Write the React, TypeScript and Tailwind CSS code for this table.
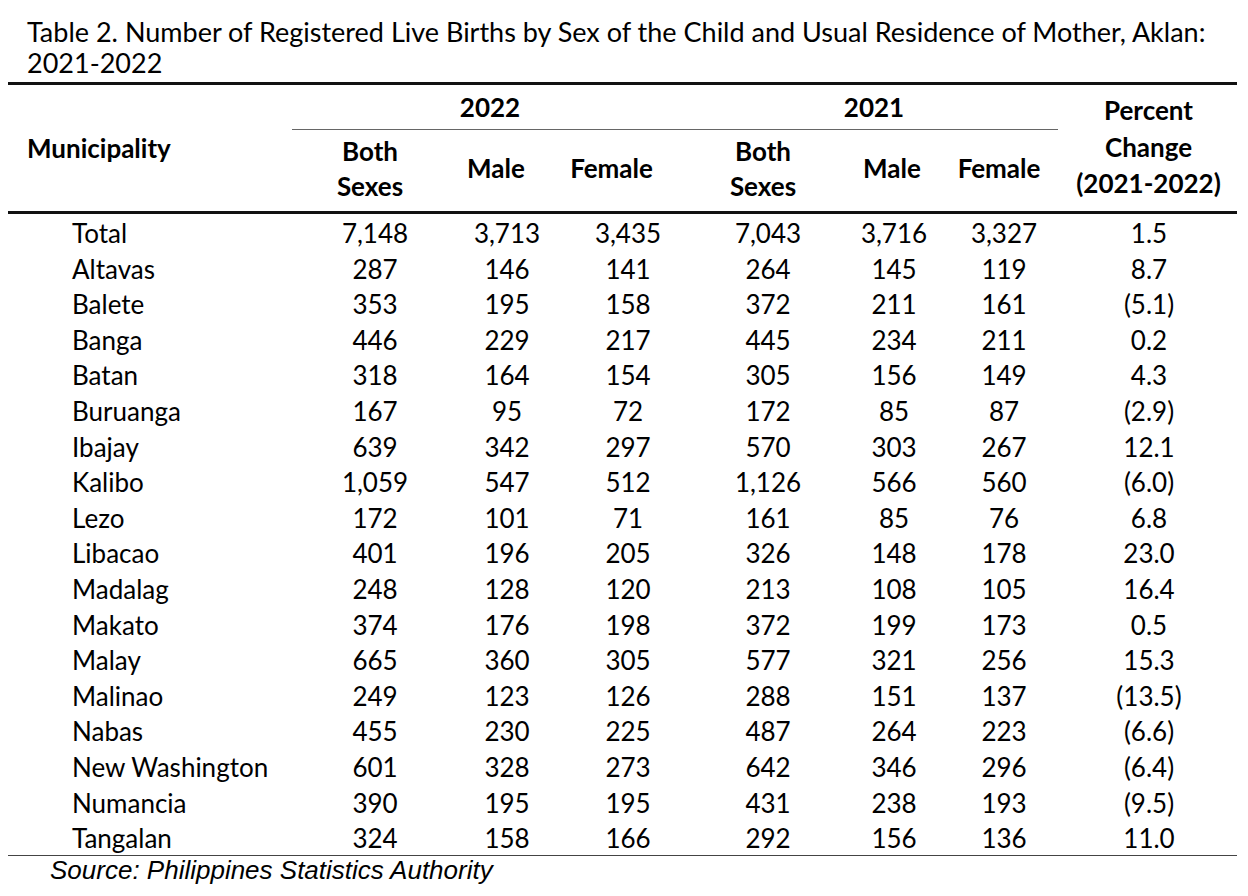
const rows: string[][] = [
  ["Total", "7,148", "3,713", "3,435", "7,043", "3,716", "3,327", "1.5"],
  ["Altavas", "287", "146", "141", "264", "145", "119", "8.7"],
  ["Balete", "353", "195", "158", "372", "211", "161", "(5.1)"],
  ["Banga", "446", "229", "217", "445", "234", "211", "0.2"],
  ["Batan", "318", "164", "154", "305", "156", "149", "4.3"],
  ["Buruanga", "167", "95", "72", "172", "85", "87", "(2.9)"],
  ["Ibajay", "639", "342", "297", "570", "303", "267", "12.1"],
  ["Kalibo", "1,059", "547", "512", "1,126", "566", "560", "(6.0)"],
  ["Lezo", "172", "101", "71", "161", "85", "76", "6.8"],
  ["Libacao", "401", "196", "205", "326", "148", "178", "23.0"],
  ["Madalag", "248", "128", "120", "213", "108", "105", "16.4"],
  ["Makato", "374", "176", "198", "372", "199", "173", "0.5"],
  ["Malay", "665", "360", "305", "577", "321", "256", "15.3"],
  ["Malinao", "249", "123", "126", "288", "151", "137", "(13.5)"],
  ["Nabas", "455", "230", "225", "487", "264", "223", "(6.6)"],
  ["New Washington", "601", "328", "273", "642", "346", "296", "(6.4)"],
  ["Numancia", "390", "195", "195", "431", "238", "193", "(9.5)"],
  ["Tangalan", "324", "158", "166", "292", "156", "136", "11.0"],
];

// nudges so the numbers sit where they do in the printed table
const cellPad = [
  "pl-[64px] pb-[1px] text-left",
  "pl-[19px] pb-[1px] text-center",
  "pl-[20px] pb-[1px] text-center",
  "pl-[3px] pb-[1px] text-center",
  "pl-[6px] pb-[1px] text-center",
  "pl-[14px] pb-[1px] text-center",
  "pl-[6px] pb-[1px] text-center",
  "pl-[1px] pb-[1px] text-center",
];

const cols = "grid grid-cols-[284px_147px_116px_143px_134px_110px_118px_177px]";

export default function App() {
  return (
    <div className="w-[1248px] h-[896px] bg-white text-black font-['Lato',sans-serif]">
      <div className="pl-[27px] pt-[16px] pb-[4px] text-[27px] leading-[31px]">
        <p>Table 2. Number of Registered Live Births by Sex of the Child and Usual Residence of Mother, Aklan:</p>
        <p>2021-2022</p>
      </div>

      <div className="ml-[8px] w-[1229px] border-t-[3px] border-[#111]">
        {/* header */}
        <div className={`${cols} grid-rows-[45px_81px] font-bold text-[26px] border-b-[3px] border-[#111]`}>
          <div className="row-span-2 flex items-center pl-[19px] pt-[1px]">Municipality</div>
          <div className="col-span-3 flex items-center justify-center pr-[10px] border-b border-[#666]">2022</div>
          <div className="col-span-3 flex items-center justify-center pr-[8px] border-b border-[#666] mr-[2px]">2021</div>
          <div className="row-span-2 flex items-center justify-center text-center leading-[36.5px] pb-[2px]">
            <span>Percent<br />Change<br />(2021-2022)</span>
          </div>
          <div className="flex items-center justify-center text-center leading-[35px] pl-[9px] pb-[4px]">
            <span>Both<br />Sexes</span>
          </div>
          <div className="flex items-center justify-center pr-[2px] pb-[4px]">Male</div>
          <div className="flex items-center justify-center pr-[30px] pb-[4px]">Female</div>
          <div className="flex items-center justify-center text-center leading-[35px] pr-[4px] pb-[4px]">
            <span>Both<br />Sexes</span>
          </div>
          <div className="flex items-center justify-center pl-[10px] pb-[4px]">Male</div>
          <div className="flex items-center justify-center pr-[4px] pb-[4px]">Female</div>
        </div>

        {/* body */}
        <div className="text-[26px] border-b border-[#444]">
          {rows.map((r) => (
            <div key={r[0]} className={`${cols} h-[35.6px] items-center`}>
              {r.map((v, i) => (
                <div key={i} className={cellPad[i]}>
                  {v}
                </div>
              ))}
            </div>
          ))}
        </div>
      </div>

      <p className="-mt-[1px] pl-[50px] text-[26px] leading-[30px] italic font-['Liberation_Sans',Arial,sans-serif]">
        Source: Philippines Statistics Authority
      </p>
    </div>
  );
}
